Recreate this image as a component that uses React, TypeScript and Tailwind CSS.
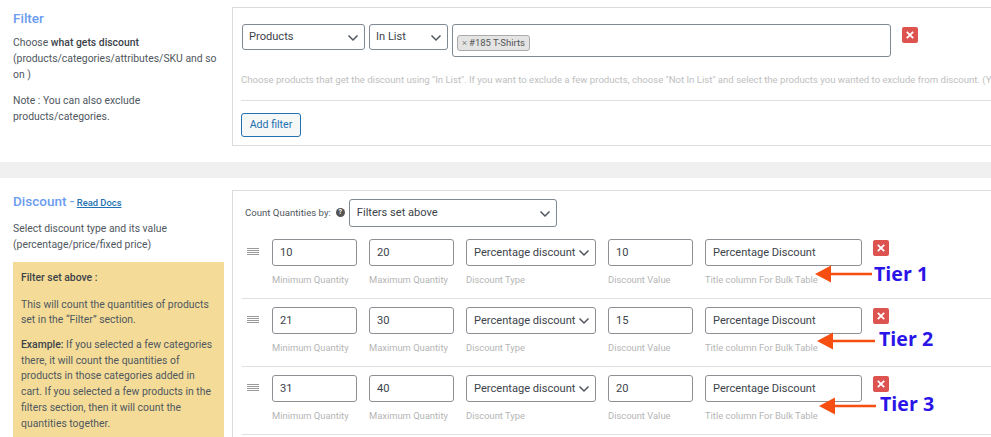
import React from "react";

const font = { fontFamily: "Roboto, 'Liberation Sans', sans-serif" };

function Chevron({ className = "" }: { className?: string }) {
  return (
    <svg width="12" height="8" viewBox="0 0 12 8" className={className} fill="none" stroke="#50575e" strokeWidth="1.5">
      <path d="M1.5 1.5 L6 6 L10.5 1.5" />
    </svg>
  );
}

function CloseBtn({ className = "" }: { className?: string }) {
  return (
    <div className={`w-4 h-4 bg-[#dc5350] rounded-[2px] flex items-center justify-center shrink-0 ${className}`}>
      <svg width="8" height="8" viewBox="0 0 8 8" stroke="#fff" strokeWidth="1.8" fill="none">
        <path d="M0.8 0.8 L7.2 7.2 M7.2 0.8 L0.8 7.2" />
      </svg>
    </div>
  );
}

function Select({ label, w, h = "h-[26px]", pl = "pl-[6px]" }: { label: string; w: string; h?: string; pl?: string }) {
  return (
    <div className={`${w} ${h} ${pl} pr-[5px] border border-[#7e8993] rounded-[3px] bg-white flex items-center justify-between text-[11.1px] text-[#3c434a] shrink-0`}>
      <span className="whitespace-nowrap">{label}</span>
      <Chevron className="mt-[2px]" />
    </div>
  );
}

function Field({ value, label, w, children }: { value?: string; label: string; w: string; children?: React.ReactNode }) {
  return (
    <div className={`${w} shrink-0`}>
      {children ?? (
        <div className="h-[27px] border border-[#8c8f94] rounded-[3px] bg-white pl-[7px] pt-px flex items-center text-[11.1px] text-[#3c434a]">
          {value}
        </div>
      )}
      <div className="mt-[8px] text-[9.4px] leading-[12px] text-[#b5b5b5] whitespace-nowrap">{label}</div>
    </div>
  );
}

function Row({ min, max, value }: { min: string; max: string; value: string }) {
  return (
    <div className="h-[68px] flex items-start pt-[8px] pl-[5px] border-b border-[#dfdfdf] ml-[9px] -mr-[60px] gap-[12px]">
      <div className="w-[12px] mt-[9px] mr-px flex flex-col gap-px shrink-0">
        <div className="h-px bg-[#9a9a9a]" />
        <div className="h-px bg-[#9a9a9a]" />
        <div className="h-px bg-[#9a9a9a]" />
        <div className="h-px bg-[#9a9a9a]" />
      </div>
      <Field value={min} label="Minimum Quantity" w="w-[85px]" />
      <Field value={max} label="Maximum Quantity" w="w-[85px]" />
      <Field label="Discount Type" w="w-[130px]">
        <div className="h-[27px] border border-[#8c8f94] rounded-[3px] bg-white pl-[7px] pr-[5px] pt-px flex items-center justify-between text-[11.1px] text-[#3c434a] whitespace-nowrap">
          <span>Percentage discount</span>
          <Chevron />
        </div>
      </Field>
      <Field value={value} label="Discount Value" w="w-[85px]" />
      <Field value="Percentage Discount" label="Title column For Bulk Table" w="w-[157px]" />
      <CloseBtn className="mt-px -ml-px" />
    </div>
  );
}

function Arrow({ x, y, w, label, lx, ly }: { x: number; y: number; w: number; label: string; lx: number; ly: number }) {
  return (
    <>
      <svg className="absolute" style={{ left: x, top: y - 9 }} width={w} height="18" viewBox={`0 0 ${w} 18`}>
        <path d={`M0 9 L16 0.5 L16 7.8 L${w} 7.8 L${w} 10.2 L16 10.2 L16 17.5 Z`} fill="#f74e12" />
      </svg>
      <div
        className="absolute text-[19.6px] leading-[24px] font-bold text-[#2a14e8] whitespace-nowrap"
        style={{ left: lx, top: ly, fontFamily: "'Open Sans', 'Liberation Sans', sans-serif" }}
      >
        {label}
      </div>
    </>
  );
}

export default function App() {
  return (
    <div className="relative w-[991px] h-[437px] overflow-hidden bg-white" style={font}>
      <section className="flex h-[162px] pt-[7px]">
        <div className="w-[232px] shrink-0 pl-[13px] pr-[8px] text-[10.4px] leading-[16px] text-[#50575e]">
          <h2 className="text-[13.5px] leading-[20px] font-medium text-[#6a9cf0] mt-px mb-[7px]">Filter</h2>
          <p>
            Choose <b className="font-medium text-[#3c434a]">what gets discount</b> (products/categories/attributes/SKU and so on )
          </p>
          <p className="mt-[10px]">Note : You can also exclude products/categories.</p>
        </div>
        <div className="w-[800px] h-[139px] shrink-0 border border-[#dcdcde] pl-[8px] pt-[16px]">
          <div className="flex items-start gap-[4px] pl-px">
            <Select label="Products" w="w-[123px]" />
            <Select label="In List" w="w-[79px]" />
            <div className="w-[439px] h-[33px] border border-[#7e8993] rounded-[3px] px-[4px] pt-[4px] shrink-0">
              <div className="inline-flex items-center h-[16px] px-[4px] gap-[2px] bg-[#e4e4e4] border border-[#aaa] rounded-[3px] text-[9.5px] text-[#555]">
                <span className="text-[#888]">×</span>
                <span>#185 T-Shirts</span>
              </div>
            </div>
            <CloseBtn className="ml-[7px] mt-[3px]" />
          </div>
          <p className="mt-[17px] text-[9.6px] leading-[12px] text-[#c0c0c0] whitespace-nowrap">
            Choose products that get the discount using "In List". If you want to exclude a few products, choose "Not In List" and select the products you wanted to exclude from discount. (Y
          </p>
          <div className="mt-[14px] border-t border-[#dfdfdf]" />
          <button className="mt-[12px] w-[60px] h-[24px] border border-[#2271b1] rounded-[3px] bg-[#f6f7f7] text-[10.6px] text-[#2271b1]">
            Add filter
          </button>
        </div>
      </section>

      <div className="h-[16px] bg-[#f0f0f0]" />

      <section className="flex pt-[12px]">
        <div className="w-[232px] shrink-0 pl-[13px] pr-[8px] text-[10.4px] leading-[16px] text-[#50575e]">
          <h2 className="text-[13.5px] leading-[20px] font-medium text-[#6a9cf0] mt-px whitespace-nowrap">
            Discount - <a className="-ml-px text-[9.4px] text-[#2271b1] underline">Read Docs</a>
          </h2>
          <p className="mt-[8px]">Select discount type and its value (percentage/price/fixed price)</p>
          <div className="mt-[9px] bg-[#f4dc98] w-[211px] h-[200px] px-[8px] pt-[8px] text-[#50575e]">
            <p className="font-medium text-[#3c434a]">Filter set above :</p>
            <p className="mt-[11px] leading-[15px]">This will count the quantities of products set in the “Filter” section.</p>
            <p className="mt-[10px] leading-[15.7px]">
              <b className="font-medium text-[#3c434a]">Example:</b> If you selected a few categories there, it will count the quantities of products in those categories added in cart. If you selected a few products in the filters section, then it will count the quantities together.
            </p>
          </div>
        </div>
        <div className="w-[800px] h-[300px] shrink-0 border border-[#dcdcde]">
          <div className="h-[40px] flex items-start pt-[8px] pl-[12px]">
            <span className="text-[9.6px] leading-[12px] mt-[8px] text-[#50575e] whitespace-nowrap">Count Quantities by:</span>
            <span className="ml-[5px] mt-[9px] w-[9px] h-[9px] rounded-full bg-[#555] text-white text-[7px] leading-[9px] text-center font-bold">?</span>
            <div className="ml-[4px]">
              <Select label="Filters set above" w="w-[208px]" h="h-[28px]" pl="pl-[7px]" />
            </div>
          </div>
          <Row min="10" max="20" value="10" />
          <Row min="21" max="30" value="15" />
          <Row min="31" max="40" value="20" />
        </div>
      </section>

      <Arrow x={815} y={274} w={57} label="Tier 1" lx={874} ly={262} />
      <Arrow x={817} y={341} w={58} label="Tier 2" lx={879} ly={327} />
      <Arrow x={819} y={406} w={57} label="Tier 3" lx={880} ly={392} />
    </div>
  );
}
